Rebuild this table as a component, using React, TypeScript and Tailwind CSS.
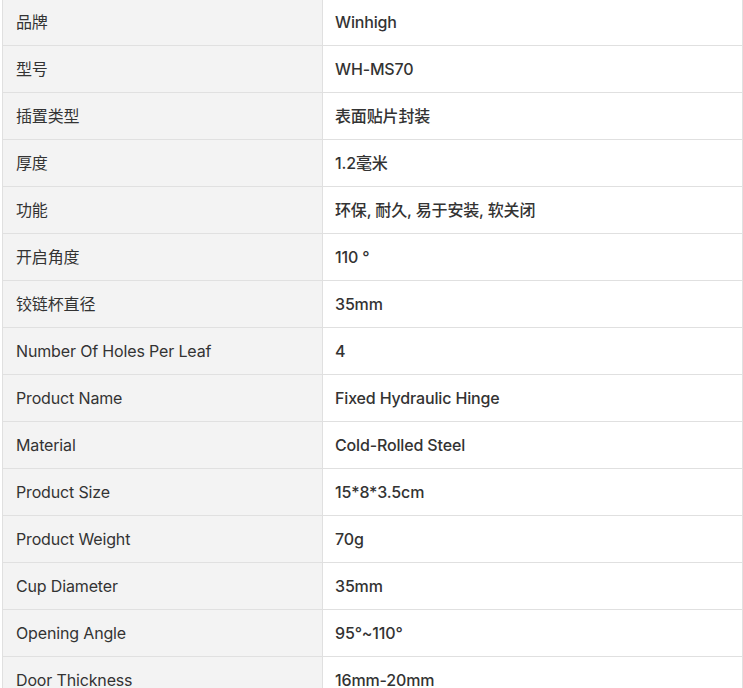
const specs: [string, string][] = [
  ["品牌", "Winhigh"],
  ["型号", "WH-MS70"],
  ["插置类型", "表面贴片封装"],
  ["厚度", "1.2毫米"],
  ["功能", "环保, 耐久, 易于安装, 软关闭"],
  ["开启角度", "110 °"],
  ["铰链杯直径", "35mm"],
  ["Number Of Holes Per Leaf", "4"],
  ["Product Name", "Fixed Hydraulic Hinge"],
  ["Material", "Cold-Rolled Steel"],
  ["Product Size", "15*8*3.5cm"],
  ["Product Weight", "70g"],
  ["Cup Diameter", "35mm"],
  ["Opening Angle", "95°~110°"],
  ["Door Thickness", "16mm-20mm"],
];

export default function App() {
  return (
    <div className="h-[688px] overflow-hidden bg-white font-['Inter','Noto_Sans_CJK_SC',sans-serif] text-[16px] tracking-[-0.15px] text-[#333]">
      <table className="-mt-[2px] ml-[2px] w-[741px] table-fixed border-collapse">
        <tbody>
          {specs.map(([label, value]) => (
            <tr key={label} className="h-[47px]">
              <td className="w-[320px] border border-[#e0e0e0] bg-[#f3f3f3] pl-[13px] align-middle">
                {label}
              </td>
              <td className="border border-[#e0e0e0] pl-[12px] align-middle font-medium">
                {value}
              </td>
            </tr>
          ))}
        </tbody>
      </table>
    </div>
  );
}
